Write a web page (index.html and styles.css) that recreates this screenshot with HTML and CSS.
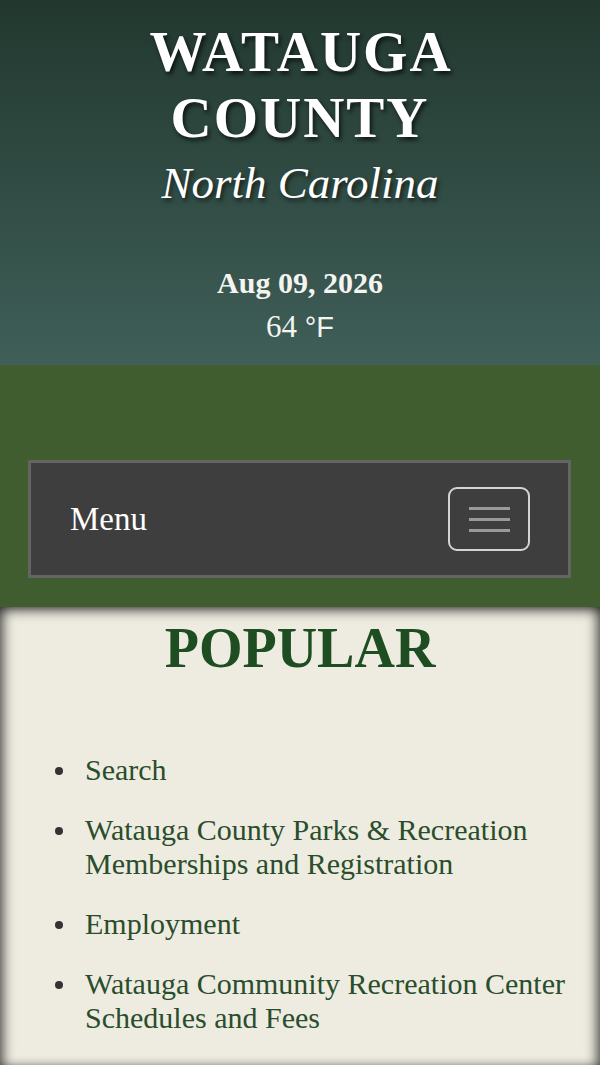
FILE: index.html
```html
<!DOCTYPE html>
<html lang="en">
<head>
<meta charset="utf-8">
<title>Watauga County, North Carolina</title>
<link rel="stylesheet" href="styles.css">
</head>
<body>
<header class="masthead">
  <div class="title">WATAUGA<br>COUNTY</div>
  <div class="subtitle">North Carolina</div>
  <div class="date">Aug 09, 2026</div>
  <div class="temp">64 <span class="unit">°F</span></div>
</header>
<section class="band">
  <nav class="menubar">
    <span class="menu-label">Menu</span>
    <button class="toggler" type="button" aria-label="Toggle navigation">
      <span class="bar"></span><span class="bar"></span><span class="bar"></span>
    </button>
  </nav>
</section>
<main class="panel">
  <h2 class="heading">POPULAR</h2>
  <ul class="links">
    <li><span>Search</span></li>
    <li><span>Watauga County Parks &amp; Recreation Memberships and Registration</span></li>
    <li><span>Employment</span></li>
    <li><span>Watauga Community Recreation Center Schedules and Fees</span></li>
  </ul>
</main>
</body>
</html>
```
FILE: styles.css
```css
html, body {
  margin: 0;
  padding: 0;
}
body {
  font-family: "Liberation Serif", "Times New Roman", serif;
  background: #eeece1;
  width: 600px;
  height: 1065px;
  overflow: hidden;
}
.masthead {
  height: 365px;
  box-sizing: border-box;
  padding-top: 19px;
  background: linear-gradient(to bottom, #22382f 0%, #3f5f58 100%);
  color: #fff;
  text-align: center;
}
.title {
  font-size: 57px;
  font-weight: bold;
  line-height: 66px;
  letter-spacing: 2px;
  text-indent: 2px;
  text-shadow: 2px 3px 4px rgba(0, 0, 0, 0.7);
}
.subtitle {
  margin-top: 6px;
  font-size: 45px;
  font-style: italic;
  line-height: 52px;
  text-shadow: 2px 3px 4px rgba(0, 0, 0, 0.6);
}
.date {
  margin-top: 54px;
  font-size: 30px;
  font-weight: bold;
  line-height: 40px;
  color: #f4f4f0;
}
.temp {
  margin-top: 2px;
  font-size: 31px;
  line-height: 44px;
  color: #f4f4f0;
}
.unit {
  font-family: "Liberation Sans", Arial, sans-serif;
  font-size: 29px;
}
.band {
  background: #405d30;
  padding: 95px 29px 29px 28px;
}
.menubar {
  height: 112px;
  background: #3e3e3e;
  border: 3px solid #646464;
  display: flex;
  align-items: center;
  justify-content: space-between;
  padding: 0 38px 0 39px;
}
.menu-label {
  color: #fff;
  font-size: 33px;
}
.toggler {
  width: 82px;
  height: 64px;
  box-sizing: border-box;
  border: 2px solid #d4d4d4;
  border-radius: 9px;
  background: transparent;
  display: flex;
  flex-direction: column;
  align-items: center;
  justify-content: center;
  gap: 8px;
  padding: 0;
}
.bar {
  display: block;
  width: 41px;
  height: 3px;
  background: #9a9a9a;
}
.panel {
  height: 458px;
  box-sizing: border-box;
  padding-top: 9px;
  background: #eeece1;
  box-shadow: inset 0 8px 12px -4px rgba(0, 0, 0, 0.55), inset 8px 0 12px -4px rgba(0, 0, 0, 0.55), inset -8px 0 12px -4px rgba(0, 0, 0, 0.55);
}
.heading {
  margin: 0;
  font-size: 56px;
  line-height: 64px;
  font-weight: bold;
  text-align: center;
  color: #1e4d22;
}
.links {
  margin: 73px 0 0 0;
  padding: 0 10px 0 55px;
  list-style: none;
}
.links li {
  display: grid;
  grid-template-columns: 30px 1fr;
  align-items: start;
  font-size: 30px;
  line-height: 34px;
  color: #2a4d2c;
  margin-bottom: 26px;
}
.links li::before {
  content: "";
  width: 8px;
  height: 8px;
  margin-top: 14px;
  border-radius: 50%;
  background: #333;
}
```
